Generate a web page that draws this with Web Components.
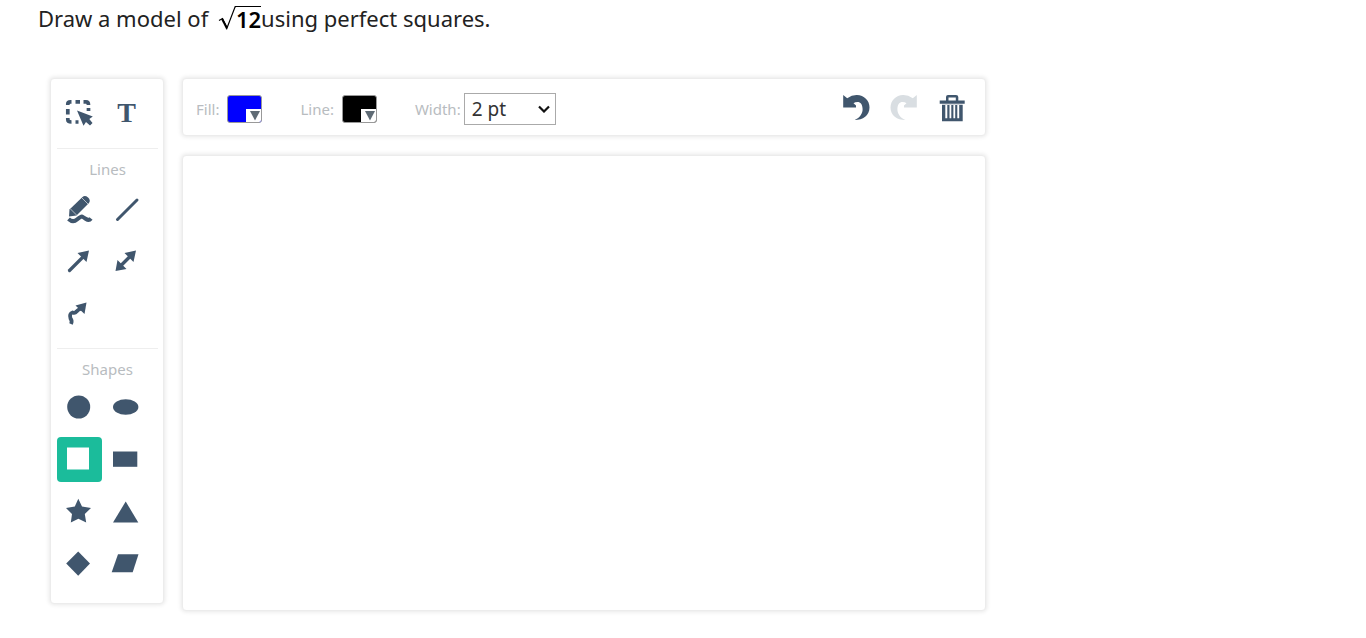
<!DOCTYPE html>
<html lang="en">
<head>
<meta charset="utf-8">
<title>Drawing question</title>
<style>
body { margin: 0; background: #fff; color: #222; font-family: "Noto Sans", "Open Sans", sans-serif; }
</style>
</head>
<body>
<drawing-question></drawing-question>
<script>
const define = (name, html, setup) => customElements.define(name, class extends HTMLElement {
  constructor() {
    super();
    this.attachShadow({ mode: 'open' }).innerHTML = html;
    if (setup) setup(this, this.shadowRoot);
  }
});

const icons = {
  select: '<path d="M10.800 15V14Q10.800 11.800 13.500 11.800H14.500M18.500 11.800H23M26.500 11.800H29Q31.500 11.800 31.500 15M31.500 18V21M10.800 19V24.500M10.800 28V29.500Q10.800 32 14.500 32M18.500 32H21.500" fill="none" stroke="currentColor" stroke-width="3.700"/><path d="M20 20.500 35.800 26.500 32.300 29 35.500 33 33 35.500 29 32 26.500 35.800Z"/>',
  pencil: '<path d="M12.500 21.500 25.500 9Q28 7 31 9.500T32 15L19.500 27.500 12 28.500Z"/><path d="M24.500 9.500 31 16M13.500 21 19.500 27" stroke="#fff" stroke-width="1" opacity=".6"/><path d="M11.500 31Q16 35 20 31.500T25 28.500 29 31 34 30.500" fill="none" stroke="currentColor" stroke-width="4"/>',
  line: '<path d="M13.500 31.500 33 12" fill="none" stroke="currentColor" stroke-width="3" stroke-linecap="round"/>',
  arrow: '<path d="M12.500 30.500 26 17" stroke="currentColor" stroke-width="3.200" stroke-linecap="round"/><path d="M32 10.500 29.500 22 20.500 13Z"/>',
  double: '<path d="M16 26.500 27 15.500" stroke="currentColor" stroke-width="3.400"/><path d="M32 10.500 29.500 22 20.500 13ZM11.500 31 13.500 20 22.500 29Z"/>',
  curve: '<path d="M14 32Q15.500 29 13.500 26.500 12 21.500 15.500 20.500 18 21.500 19.500 19.500T24.500 16.500" fill="none" stroke="currentColor" stroke-width="3.800"/><path d="M29.500 10.500 27.500 22 18.500 13.500Z"/>',
  circle: '<circle cx="21.700" cy="22" r="11.500"/>',
  ellipse: '<ellipse cx="21.700" cy="22" rx="12.700" ry="7.700"/>',
  square: '<path d="M10 10.500H32V32.500H10Z"/>',
  rectangle: '<path d="M9 14.500H33.300V29.800H9Z"/>',
  star: '<path d="M21.300 9.800 25 17.500 34 19 27.800 25 29.200 33.500 21.400 29.800 13.800 33.500 15 25 9 19 17.800 17.500Z"/>',
  triangle: '<path d="M21.700 12.500 34.300 33.500H9Z"/>',
  diamond: '<path d="M21.200 10.500 33 22.600 21.200 34.700 9.200 22.600Z"/>',
  parallelogram: '<path d="M14 13.300H34.500L28.700 31.200H7.700Z"/>',
  undo: '<path d="M1.200 1 5.200 4.200Q10 .8 15 1C22 1.200 27.500 6.500 27.500 13.500 27.500 21.500 21 26 12.600 26.100 18 23.500 20.700 19.500 20.600 15 20.500 10.500 18.500 8 15.500 8Q13 8 11.500 9.200L14 11.500V13.500H1.200Z"/>',
  trash: '<path fill-rule="evenodd" d="M8 6.500V3Q8 1 10 1H18Q20.300 1 20.300 3V6.500H26.700V9.800H1.700V6.500ZM10.500 6.500H17.800V3.500H10.500ZM4 10.800H24.700V27.300H4ZM7.300 11V24.300H9.300V11ZM11.500 11V24.300H13.300V11ZM15.400 11V24.300H17.200V11ZM19.300 11V24.300H21.200V11Z"/>'
};
icons.redo = '<g transform="translate(28 0) scale(-1 1)">' + icons.undo + '</g>';

define('ui-panel', `<style>
  :host { display: block; box-sizing: border-box; background: #fff; border: 1px solid #ececec; border-radius: 4px; box-shadow: 0 0 4px 1px #e8e8e8; }
</style><slot></slot>`);

define('draw-tool', `<style>
  :host { display: block; }
  button { display: flex; align-items: center; justify-content: center; width: 45px; height: 45px; padding: 0; border: 0; border-radius: 4px; background: none; color: #40566d; font: bold 28px/45px "Liberation Serif", serif; }
  :host([selected]) button { background: #1bbc9b; color: #fff; }
  :host([bar]) button { width: 28px; height: 28px; }
  :host([disabled]) button { color: #d9dee2; }
  svg { display: block; fill: currentColor; }
</style><button type="button"></button>`, (host, root) => {
  const kind = host.getAttribute('icon');
  const button = root.querySelector('button');
  const size = host.hasAttribute('bar') ? 28 : 45;
  button.setAttribute('aria-label', host.getAttribute('label') || kind || 'text');
  button.disabled = host.hasAttribute('disabled');
  button.innerHTML = kind ? `<svg width="${size}" height="${size}" viewBox="0 0 ${size} ${size}" aria-hidden="true">${icons[kind]}</svg>` : 'T';
});

define('tool-group', `<style>
  :host { display: block; border-top: 1px solid #eee; padding: 10px 0 11px; }
  :host(:first-child) { border: 0; padding: 11px 0 13px; }
  h2 { margin: 0 0 8px; font-size: 15px; line-height: 21px; font-weight: 400; color: #b8bcc0; text-align: center; }
  :host([compact]) h2 { margin-bottom: 5px; }
  div { display: grid; grid-template-columns: 45px 45px; gap: 7px 2px; }
</style><h2></h2><div><slot></slot></div>`, (host, root) => {
  const heading = root.querySelector('h2');
  if (host.hasAttribute('name')) heading.textContent = host.getAttribute('name');
  else heading.remove();
});

define('colour-picker', `<style>
  :host { display: flex; align-items: center; gap: 8px; }
  label { font-size: 15px; line-height: 20px; color: #b8bcc0; }
  button { display: flex; align-items: flex-end; justify-content: flex-end; box-sizing: border-box; width: 35px; height: 28px; padding: 0; border: 1px solid #999; border-radius: 3px; background: var(--swatch); overflow: hidden; }
  svg { display: block; background: #fff; }
</style><label for="swatch"><slot></slot></label><button id="swatch" type="button"><svg width="15" height="13" viewBox="0 0 15 13" aria-hidden="true"><path d="M4 2H14L9 11.500Z" fill="#5f6b75"/></svg></button>`);

define('line-width', `<style>
  :host { display: flex; align-items: center; gap: 3px; }
  label { font-size: 15px; line-height: 20px; color: #b8bcc0; }
  span { display: grid; align-items: center; }
  select { grid-area: 1 / 1; appearance: none; box-sizing: border-box; width: 92px; height: 32px; margin: 0; padding: 0 8px 0 7px; border: 1px solid #aaa; border-radius: 0; background: #fff; color: #333; font: 19px/28px "Noto Sans", sans-serif; }
  svg { grid-area: 1 / 1; justify-self: end; margin-right: 6px; pointer-events: none; }
</style><label for="width">Width:</label><span><select id="width"><option>1 pt</option><option selected>2 pt</option><option>3 pt</option></select><svg width="12" height="8" viewBox="0 0 12 8" fill="none" stroke="#111" stroke-width="2.200" aria-hidden="true"><path d="M1 1.500 6 6.500 11 1.500"/></svg></span>`);

define('square-root', `<style>
  :host { display: inline-flex; align-items: flex-start; color: #000; vertical-align: top; margin-left: 4px; }
  svg { display: block; }
  span { font: 600 22px/24px "Noto Sans", sans-serif; border-top: 1px solid #000; }
</style><svg width="18" height="25" viewBox="0 0 18 25" aria-hidden="true"><path d="M1 14.500 4.500 12.500 9 22 17.200 .6H18" fill="none" stroke="#000" stroke-width="1.200"/><path d="M3 13 5 12.500 9.500 21 8.600 24Z"/></svg><span><slot></slot></span>`);

define('drawing-question', `<style>
  :host { display: block; padding: 6px 38px 26px; }
  p { margin: 0 0 47px; font-size: 22px; line-height: 25px; }
  main { display: grid; grid-template-columns: 114px minmax(0, 804px); gap: 18px; padding-left: 12px; align-items: start; }
  .tools { padding: 0 5px 6px 6px; }
  .work { display: grid; gap: 19px; }
  .bar { display: flex; align-items: center; padding: 12px 19px 8px 13px; height: 58px; }
  .bar colour-picker { margin-right: 38px; }
  .actions { display: flex; gap: 20px; margin: 0 0 2px auto; }
  .canvas { min-height: 456px; }
</style>
<p>Draw a model of <square-root>12</square-root>using perfect squares.</p>
<main>
  <ui-panel class="tools">
    <tool-group><draw-tool icon="select"></draw-tool><draw-tool></draw-tool></tool-group>
    <tool-group name="Lines"><draw-tool icon="pencil"></draw-tool><draw-tool icon="line"></draw-tool><draw-tool icon="arrow"></draw-tool><draw-tool icon="double" label="double arrow"></draw-tool><draw-tool icon="curve"></draw-tool></tool-group>
    <tool-group name="Shapes" compact><draw-tool icon="circle"></draw-tool><draw-tool icon="ellipse"></draw-tool><draw-tool icon="square" selected></draw-tool><draw-tool icon="rectangle"></draw-tool><draw-tool icon="star"></draw-tool><draw-tool icon="triangle"></draw-tool><draw-tool icon="diamond"></draw-tool><draw-tool icon="parallelogram"></draw-tool></tool-group>
  </ui-panel>
  <div class="work">
    <ui-panel class="bar">
      <colour-picker style="--swatch: #00f">Fill:</colour-picker>
      <colour-picker style="--swatch: #000">Line:</colour-picker>
      <line-width></line-width>
      <div class="actions"><draw-tool bar icon="undo"></draw-tool><draw-tool bar icon="redo" disabled></draw-tool><draw-tool bar icon="trash"></draw-tool></div>
    </ui-panel>
    <ui-panel class="canvas"></ui-panel>
  </div>
</main>`);
</script>
</body>
</html>
